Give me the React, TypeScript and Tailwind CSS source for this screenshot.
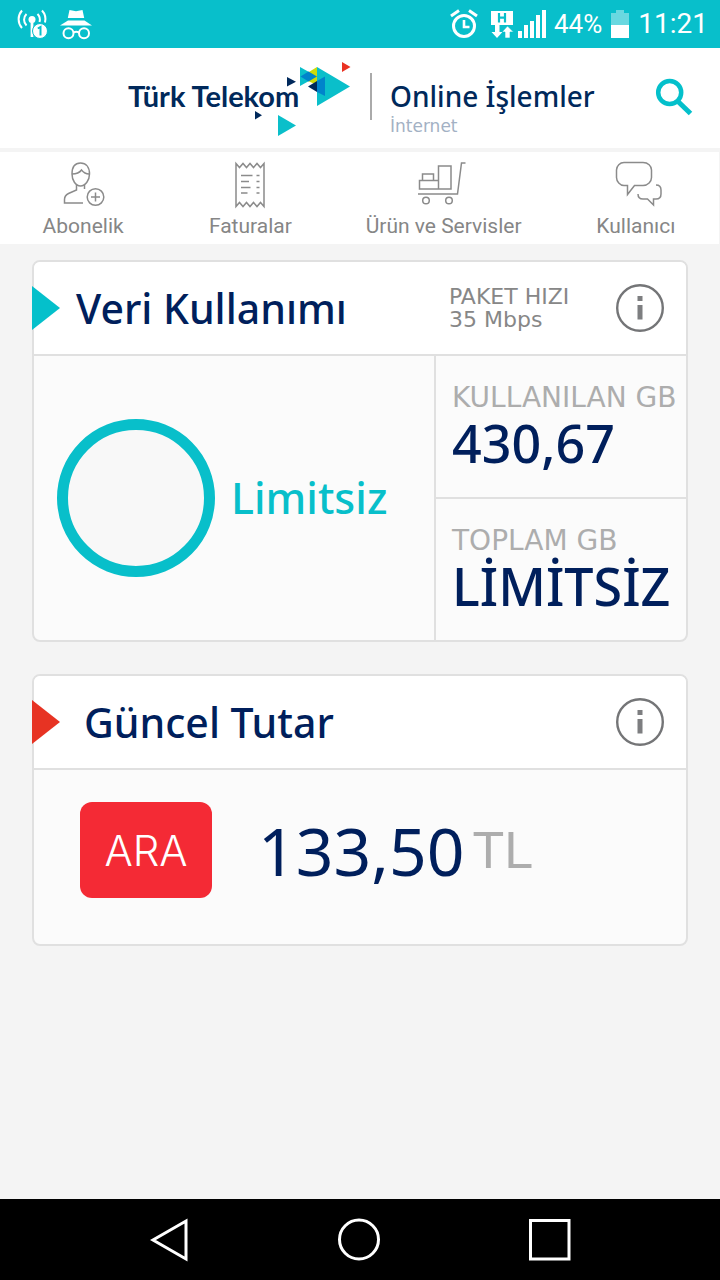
import type { ReactNode } from 'react';

function StatusBar() {
  return (
    <div className="flex h-12 items-center justify-between bg-[#08bfcb] pl-4 pr-3 font-[Roboto,sans-serif] text-white">
      <div className="flex items-center gap-3">
        <svg className="h-8 w-8" viewBox="0 0 32 32" fill="none" stroke="#fff" strokeWidth="2">
          <circle cx="16" cy="11.5" r="3.5" fill="#fff" stroke="none" />
          <path d="M16 12v17" strokeWidth="2.8" />
          <path d="M10.5 6a8 8 0 0 0 0 11.5M21.5 6a8 8 0 0 1 2 8" />
          <path d="M6 2.5a13 13 0 0 0 0 17.5M26 2.5a13 13 0 0 1 3 12" />
          <circle cx="24" cy="23" r="7.5" fill="#fff" stroke="#08bfcb" strokeWidth="1" />
          <path d="M21.8 20.5l2.7-1.5v8.5" stroke="#08bfcb" strokeWidth="2" />
        </svg>
        <svg className="h-8 w-8" viewBox="0 0 32 32" fill="#fff">
          <path d="M9.5 2l4 .8q2.5.7 5 0l4-.8 1.7 8H7.8z" />
          <path d="M8 12.5h16.5l7.5 5H0z" />
          <g fill="none" stroke="#fff" strokeWidth="2">
            <circle cx="8.5" cy="25.3" r="5" />
            <circle cx="24" cy="25.3" r="5" />
            <path d="M13.5 24.5q2.7-1.5 5.500 0" />
          </g>
        </svg>
      </div>
      <div className="flex items-center gap-2">
        <svg className="mr-1 h-8 w-7" viewBox="0 0 28 32" fill="none" stroke="#fff">
          <circle cx="14" cy="18" r="10.5" strokeWidth="3" />
          <path d="M14 12v7h5.5" strokeWidth="2.6" />
          <path d="M1 8l8-5.5M27 8l-8-5.5" strokeWidth="3" />
        </svg>
        <svg className="h-8 w-6" viewBox="0 0 24 32" fill="#fff">
          <path d="M1 3h22v14H1z" />
          <path d="M9 5v9.5M15 5v9.5M9 9.7h6" stroke="#08bfcb" strokeWidth="2.2" />
          <path d="M5 16h4.5v8h3L7 30l-5.5-6H5z" />
          <path d="M15 30h5v-6h3.5L17.5 18 12 24h3z" stroke="#08bfcb" strokeWidth=".6" />
        </svg>
        <svg className="-ml-1 h-7 w-7" viewBox="0 0 28 28" fill="#fff">
          <path d="M0 21h4v7H0zM6 15h4v13H6zM12 11h4v17h-4zM18 5h4v23h-4zM24 0h4v28h-4z" />
        </svg>
        <span className="text-[26px] leading-8">44%</span>
        <svg className="h-7 w-5" viewBox="0 0 20 28" fill="#fff">
          <path d="M1 3h5V0h8v3h5v12H1z" opacity=".4" />
          <path d="M1 15h18v13H1z" />
        </svg>
        <span className="text-[28px] leading-8">11:21</span>
      </div>
    </div>
  );
}

function Logo() {
  return (
    <div className="relative h-20 w-[226px]">
      <span className="absolute left-0.5 top-[18px] whitespace-nowrap font-[Lato,sans-serif] text-[29px] font-bold leading-10 text-[#00295b]">
        Türk Telekom
      </span>
      <svg className="absolute inset-0 h-20 w-[226px]" viewBox="0 0 226 80">
        <path d="M174 9l17 9.5-17 9.5z" fill="#0abfca" />
        <path d="M191 9v16l-13-8z" fill="#ccdb0b" />
        <path d="M191 9v39l33-19.5z" fill="#0abfca" />
        <path d="M182 23l9-5v9z" fill="#ccdb0b" />
        <path d="M174.5 18.500l8-5 8.500 5-8.500 5z" fill="#0084cb" />
        <path d="M182 28.500l9-5.500v11z" fill="#00295b" />
        <path d="M191 23l8-4.500V38l-8-4z" fill="#0084cb" />
        <path d="M161 19v9.500l9-4.700z" fill="#00295b" />
        <path d="M216 4v10l8.500-5z" fill="#ea3223" />
        <path d="M129 53v8.500l7-4.200z" fill="#00295b" />
        <path d="M152 57v21l18-10.500z" fill="#0abfca" />
      </svg>
    </div>
  );
}

function Header() {
  return (
    <header className="flex h-[100px] items-start bg-white pl-[126px] pr-6">
      <div className="pt-2.5">
        <Logo />
      </div>
      <div className="ml-[18px] mt-[25px] h-[47px] w-0.5 bg-[#aaaaaa]" />
      <div className="ml-[18px] whitespace-nowrap pt-8">
        <div className="text-[28px] font-medium leading-8 text-[#00295b]">Online İşlemler</div>
        <div className="mt-0.5 font-['DejaVu_Sans',sans-serif] text-[17px] leading-6 text-[#a3b1c4]">
          İnternet
        </div>
      </div>
      <button type="button" aria-label="Ara" className="ml-auto mt-[26px] h-12 w-12">
        <svg className="h-12 w-12" viewBox="0 0 48 48" fill="none" stroke="#04c0cb">
          <circle cx="21.7" cy="18.5" r="11.5" strokeWidth="4.5" />
          <path d="M29.5 27l13 12.500" strokeWidth="5" />
        </svg>
      </button>
    </header>
  );
}

function NavItem({ label, children }: { label: string; children: ReactNode }) {
  return (
    <a href="#" className="flex flex-col items-center pt-2">
      <svg
        className="h-12 w-12 overflow-visible"
        viewBox="0 0 48 48"
        fill="none"
        stroke="#8b8b8b"
        strokeWidth="1.5"
      >
        {children}
      </svg>
      <span className="mt-1 whitespace-nowrap text-[21px] leading-7 text-[#868686]">{label}</span>
    </a>
  );
}

function NavBar() {
  return (
    <nav className="mr-px mt-1 grid h-[92px] grid-cols-[166fr_168fr_218fr_166fr] bg-white font-[Roboto,sans-serif]">
      <NavItem label="Abonelik">
        <path d="M13 14c0-7 3-11 8.500-11s9 4 9 11c0 6-4 12-9 12s-8.500-6-8.500-12z" />
        <path d="M13 14c4 0 7-.5 9.500-4 2 2.500 4 4 7.500 4M17.500 25v5l-8 3.500q-4 2-4 6V43h18.500M25.500 25v4" />
        <circle cx="36.5" cy="37" r="8.3" />
        <path d="M32 37h9M36.500 32.500v9" />
      </NavItem>
      <NavItem label="Faturalar">
        <path d="M10 3.500l3.500 4 3.500-4 3.500 4 3.500-4 3.500 4 3.500-4 3.500 4 3.500-4v43l-3.500-4-3.500 4-3.500-4-3.500 4-3.500-4-3.500 4-3.500-4-3.500 4z" />
        <path d="M15 15.500h11.500M15 21.500h8M15 27.500h9.500M15 33h6.500M30.500 15.500h3M30.500 21.500h3M30.500 27.500h3M30.500 33h3" />
      </NavItem>
      <NavItem label="Ürün ve Servisler">
        <path d="M-2 34h39.500l4-31h4M-.500 29V20.500h19V29zM2.500 20.500V14h11v6.500M18.500 29V6H31v23z" />
        <circle cx="6" cy="40.5" r="3.3" />
        <circle cx="29" cy="40.5" r="3.3" />
      </NavItem>
      <NavItem label="Kullanıcı">
        <path d="M12 2.500h19c5 0 8.500 3.500 8.500 7.500v7.500c0 4-3.500 8-8.500 8h-8.500l-7 9v-9H12c-4 0-7.500-4-7.500-8V10c0-4 3.500-7.500 7.500-7.500z" />
        <path d="M44 25c3 0 5 2 5 5v4c0 3-2 5-5 5h-2.500v6l-6-6H31c-3 0-5-2-5-5" />
      </NavItem>
    </nav>
  );
}

function InfoButton() {
  return (
    <button type="button" aria-label="Bilgi" className="h-12 w-12">
      <svg className="h-12 w-12" viewBox="0 0 48 48">
        <circle cx="24" cy="24" r="22.8" fill="none" stroke="#747577" strokeWidth="2.4" />
        <path d="M21.500 12h5v5h-5zM21.500 21h5v14.500h-5z" fill="#7d7e80" />
      </svg>
    </button>
  );
}

function Marker({ fill }: { fill: string }) {
  return (
    <svg className="-ml-0.5 h-11 w-7" viewBox="0 0 28 44">
      <path d="M0 0l28 22L0 44z" fill={fill} />
    </svg>
  );
}

function Figure({ label, value }: { label: string; value: string }) {
  return (
    <div className="flex flex-1 flex-col whitespace-nowrap pl-4 pt-6">
      <dt className="font-['DejaVu_Sans',sans-serif] text-[28px] leading-9 text-[#adadad]">{label}</dt>
      <dd className="text-[52px] font-medium leading-[54px] text-[#001f5c]">{value}</dd>
    </div>
  );
}

export default function App() {
  return (
    <div className="flex min-h-screen flex-col bg-[#f4f4f4] font-['Noto_Sans',sans-serif]">
      <StatusBar />
      <Header />
      <NavBar />
      <main className="flex flex-1 flex-col gap-8 px-8 py-4">
        <section className="rounded-lg border-2 border-[#e0e0e0] bg-[#fbfbfb]">
          <div className="flex h-[94px] items-center rounded-t-md border-b-2 border-[#e0e0e0] bg-white pr-[22px]">
            <Marker fill="#04c0cb" />
            <h2 className="ml-4 whitespace-nowrap text-[41px] font-medium leading-[48px] text-[#001f5c]">
              Veri Kullanımı
            </h2>
            <div className="ml-auto w-[167px] whitespace-nowrap font-['DejaVu_Sans',sans-serif] text-[22px] leading-[23px] text-[#878787]">
              <div>PAKET HIZI</div>
              <div>35 Mbps</div>
            </div>
            <InfoButton />
          </div>
          <div className="flex h-[284px]">
            <div className="flex flex-1 items-center gap-4 pl-[23px]">
              <div className="h-[158px] w-[158px] rounded-full border-[11px] border-[#08bfca] bg-[#f8f8f8]" />
              <span className="text-[43px] font-medium leading-[48px] text-[#08bfca]">Limitsiz</span>
            </div>
            <dl className="flex w-[252px] flex-col divide-y-2 divide-[#e0e0e0] border-l-2 border-[#e0e0e0]">
              <Figure label="KULLANILAN GB" value="430,67" />
              <Figure label="TOPLAM GB" value="LİMİTSİZ" />
            </dl>
          </div>
        </section>

        <section className="rounded-lg border-2 border-[#e0e0e0] bg-[#fbfbfb]">
          <div className="flex h-[94px] items-center rounded-t-md border-b-2 border-[#e0e0e0] bg-white pr-[22px]">
            <Marker fill="#e73323" />
            <h2 className="ml-6 whitespace-nowrap text-[41px] font-medium leading-[48px] text-[#001f5c]">
              Güncel Tutar
            </h2>
            <div className="ml-auto flex">
              <InfoButton />
            </div>
          </div>
          <div className="flex h-[174px] items-start pl-[46px] pt-8">
            <button
              type="button"
              className="h-24 w-[132px] rounded-xl bg-[#f42a35] font-[Inter,sans-serif] text-[42px] font-light text-white"
            >
              ARA
            </button>
            <div className="ml-[46px] flex items-center gap-2 whitespace-nowrap">
              <span className="text-[66px] leading-24 text-[#001f5c]">133,50</span>
              <span className="font-['Liberation_Sans',sans-serif] text-[52px] leading-24 text-[#adadad]">
                TL
              </span>
            </div>
          </div>
        </section>
      </main>

      <footer className="flex h-[81px] items-center justify-between bg-black px-[148px]">
        <button type="button" aria-label="Geri" className="h-11 w-11">
          <svg className="h-11 w-11" viewBox="0 0 44 44" fill="none" stroke="#fff" strokeWidth="3">
            <path d="M38 3v38L5 22z" />
          </svg>
        </button>
        <button type="button" aria-label="Ana ekran" className="h-11 w-11">
          <svg className="h-11 w-11" viewBox="0 0 44 44" fill="none" stroke="#fff" strokeWidth="3">
            <circle cx="21" cy="21.5" r="19.5" />
          </svg>
        </button>
        <button type="button" aria-label="Son uygulamalar" className="h-11 w-11">
          <svg className="h-11 w-11" viewBox="0 0 44 44" fill="none" stroke="#fff" strokeWidth="3">
            <path d="M2.500 2.500H41V41H2.500z" />
          </svg>
        </button>
      </footer>
    </div>
  );
}
